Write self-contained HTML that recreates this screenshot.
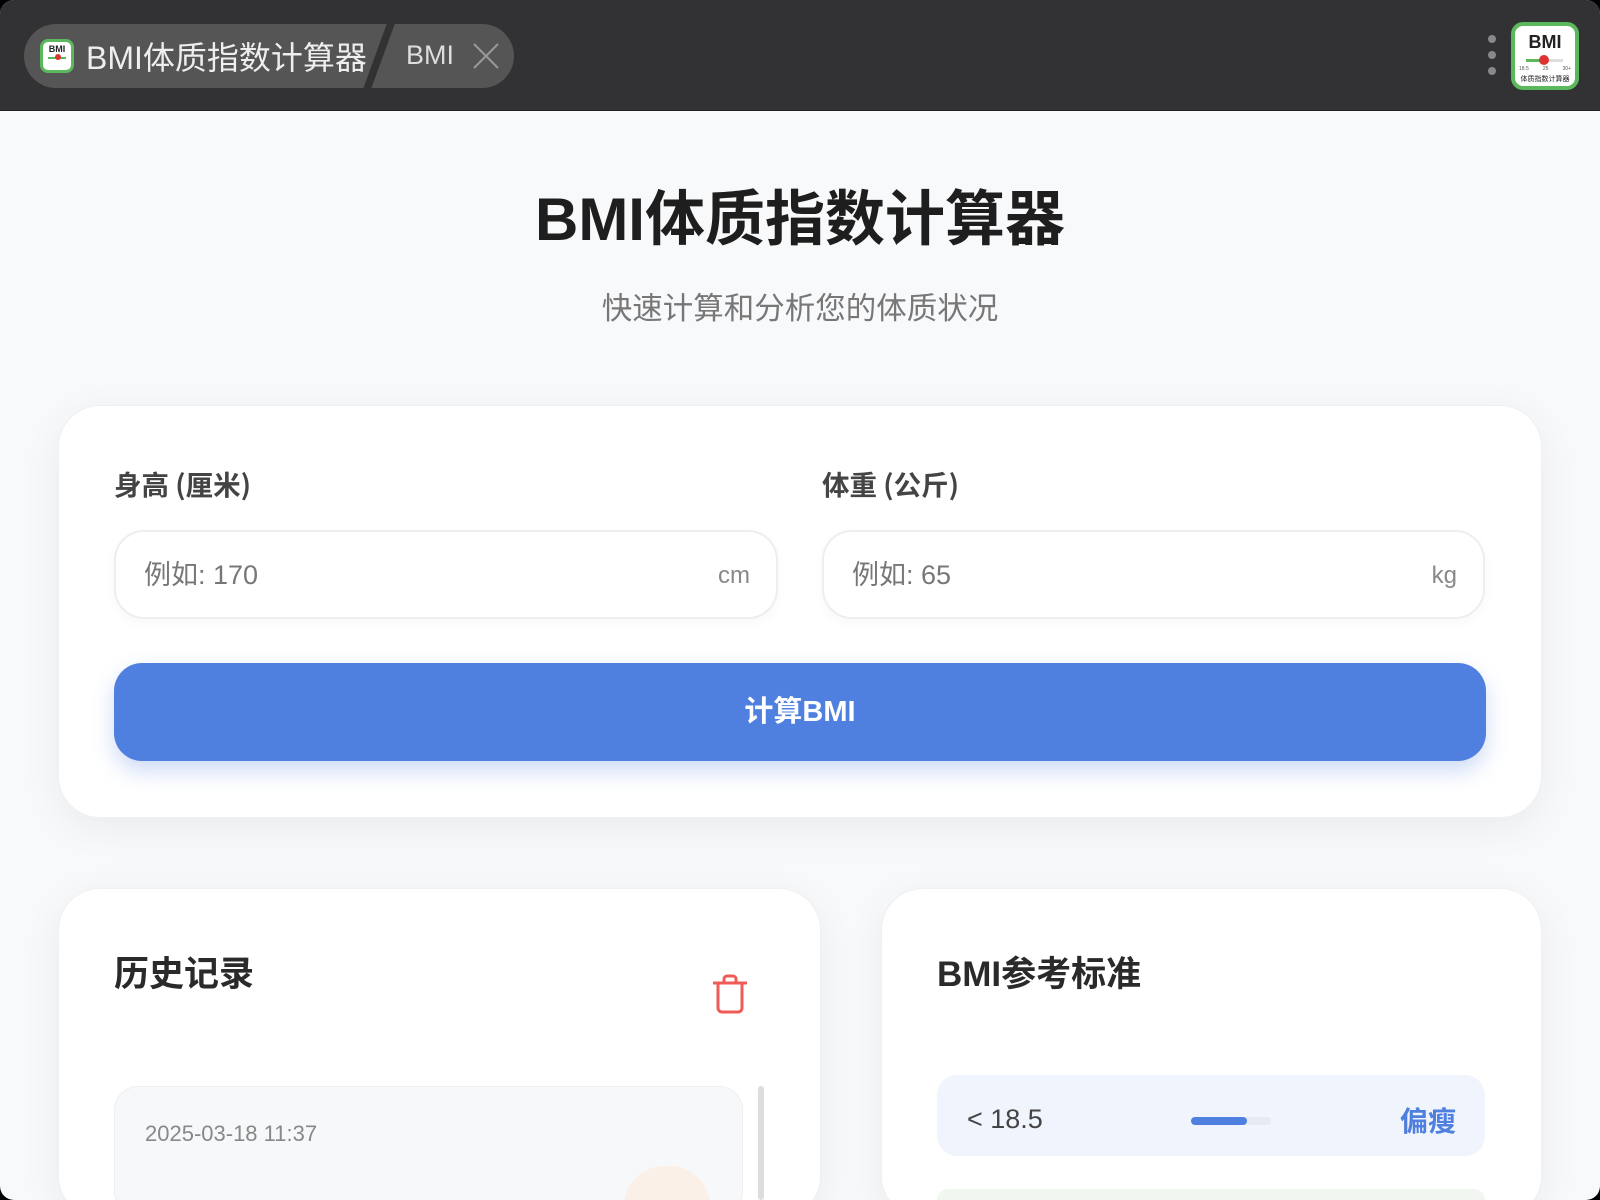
<!DOCTYPE html>
<html><head><meta charset="utf-8">
<style>
*{box-sizing:border-box;margin:0;padding:0}
html,body{width:1600px;height:1200px;overflow:hidden;background:#000;font-family:"Liberation Sans","Noto Sans CJK SC",sans-serif}
.win{position:absolute;left:0;top:0;width:1600px;height:1200px;border-radius:14px;overflow:hidden;background:#f8f9fb}
.bar{position:absolute;left:0;top:0;width:1600px;height:111px;background:#323234;border-bottom:1px solid #222}
.tab{position:absolute;left:24px;top:24px;height:64px;width:490px;border-radius:32px;background:#555;overflow:hidden}
.tab .sep{position:absolute;left:350px;top:-5px;width:8px;height:80px;background:#323234;transform:skewX(-20deg)}
.tab .ic{position:absolute;left:16px;top:15px;width:34px;height:34px;border:3px solid #5cb85c;border-radius:8px;background:#fff}
.tab .ic b{position:absolute;left:0;right:0;top:2px;text-align:center;font-size:9px;color:#222}
.tab .ic i{position:absolute;left:5px;top:15px;width:18px;height:2px;background:#5cb85c}
.tab .ic u{position:absolute;left:12px;top:12px;width:6px;height:6px;border-radius:50%;background:#d33}
.tab .t1{position:absolute;left:62px;top:9px;font-size:32px;color:#eee;white-space:nowrap}
.tab .t2{position:absolute;left:382px;top:16px;font-size:27px;color:#ddd}
.tab svg{position:absolute;left:448px;top:18px}
.dots{position:absolute;left:1488px;top:35px}
.dots span{display:block;width:8px;height:8px;border-radius:50%;background:#888;margin-bottom:8px}
.app{position:absolute;left:1511px;top:22px;width:68px;height:68px;border:4px solid #5cb85c;border-radius:12px;background:#fff}
.app b{position:absolute;left:0;right:0;top:6px;text-align:center;font-size:18px;color:#222;font-weight:bold}
.app .g{position:absolute;left:11px;top:33px;width:14px;height:3px;background:#5cb85c}
.app .gr{position:absolute;left:32px;top:33px;width:16px;height:3px;background:#ddd}
.app .r{position:absolute;left:24px;top:29px;width:10px;height:10px;border-radius:50%;background:#d33}
.app .n{position:absolute;left:4px;right:4px;top:40px;font-size:5px;color:#555;display:flex;justify-content:space-between}
.app .c{position:absolute;left:0;right:0;top:48px;text-align:center;font-size:7px;color:#222}
h1{position:absolute;left:0;width:1600px;top:171px;text-align:center;font-size:60px;font-weight:bold;color:#1e1e1e}
.sub{position:absolute;left:0;width:1600px;top:284px;text-align:center;font-size:30.5px;color:#777}
.card{position:absolute;background:#fff;border-radius:42px;box-shadow:0 10px 40px rgba(0,0,0,.06);border:1px solid #eef0f3}
.lbl{position:absolute;font-size:27.5px;font-weight:bold;color:#444;font-family:"Noto Sans CJK SC",sans-serif;line-height:1}
.inp{position:absolute;height:89px;border:2px solid #eee;border-radius:30px;background:#fff;box-shadow:0 4px 12px rgba(0,0,0,.03)}
.inp .p{position:absolute;left:28px;top:21px;font-size:27px;color:#777}
.inp .u{position:absolute;right:26px;top:30px;font-size:24px;color:#888}
.btn{position:absolute;left:114px;top:663px;width:1372px;height:98px;border-radius:28px;background:#4f7fdf;color:#fff;font-size:29px;font-weight:bold;text-align:center;line-height:98px;box-shadow:0 10px 22px rgba(79,127,223,.28)}
.h2{position:absolute;font-size:35px;font-weight:bold;color:#2a2a2a}
</style></head><body>
<div class="win">
<div class="bar">
 <div class="tab"><div class="sep"></div><div class="ic"><b>BMI</b><i></i><u></u></div>
  <div class="t1">BMI体质指数计算器</div><div class="t2">BMI</div>
  <svg width="28" height="28" viewBox="0 0 28 28"><path d="M2 2L26 26M26 2L2 26" stroke="#999" stroke-width="2"/></svg></div>
 <div class="dots"><span></span><span></span><span></span></div>
 <div class="app"><b>BMI</b><div class="g"></div><div class="gr"></div><div class="r"></div><div class="n"><span>18.5</span><span>25</span><span>30+</span></div><div class="c">体质指数计算器</div></div>
</div>
<h1>BMI体质指数计算器</h1>
<div class="sub">快速计算和分析您的体质状况</div>
<div class="card" style="left:58px;top:405px;width:1484px;height:413px"></div>
<div class="lbl" style="left:114px;top:470px">身高 (厘米)</div>
<div class="lbl" style="left:822px;top:470px">体重 (公斤)</div>
<div class="inp" style="left:114px;top:530px;width:664px"><span class="p">例如: 170</span><span class="u">cm</span></div>
<div class="inp" style="left:822px;top:530px;width:663px"><span class="p">例如: 65</span><span class="u">kg</span></div>
<div class="btn">计算BMI</div>
<div class="card" style="left:58px;top:888px;width:763px;height:330px"></div>
<div class="card" style="left:881px;top:888px;width:661px;height:330px"></div>
<div class="h2" style="left:114px;top:946px">历史记录</div>
<svg style="position:absolute;left:712px;top:974px" width="36" height="40" viewBox="0 0 36 40"><path d="M1 9H35M12 9V5a3 3 0 0 1 3-3h6a3 3 0 0 1 3 3v4M6 9v25a4 4 0 0 0 4 4h16a4 4 0 0 0 4-4V9" fill="none" stroke="#ef5b57" stroke-width="3" stroke-linejoin="round"/></svg>
<div style="position:absolute;left:114px;top:1086px;width:629px;height:130px;border-radius:24px;background:#f7f8fa;border:1px solid #eceef1"></div>
<div style="position:absolute;left:145px;top:1121px;font-size:22px;color:#888">2025-03-18 11:37</div>
<div style="position:absolute;left:624px;top:1166px;width:86px;height:40px;border-radius:43px 43px 0 0;background:#fbf0e8"></div>
<div style="position:absolute;left:758px;top:1086px;width:6px;height:114px;border-radius:3px;background:#ddd"></div>
<div class="h2" style="left:937px;top:946px">BMI参考标准</div>
<div style="position:absolute;left:937px;top:1075px;width:548px;height:81px;border-radius:20px;background:#f0f4fc"></div>
<div style="position:absolute;left:967px;top:1104px;font-size:27px;color:#444">&lt; 18.5</div>
<div style="position:absolute;left:1191px;top:1117px;width:80px;height:8px;border-radius:4px;background:#e6eaf2"><div style="width:56px;height:8px;border-radius:4px;background:#4f7fdf"></div></div>
<div style="position:absolute;left:1400px;top:1100px;font-size:28px;font-weight:bold;color:#4f7fdf">偏瘦</div>
<div style="position:absolute;left:937px;top:1189px;width:548px;height:11px;border-radius:20px 20px 0 0;background:#f1f7f0"></div>
</div>
</body></html>
